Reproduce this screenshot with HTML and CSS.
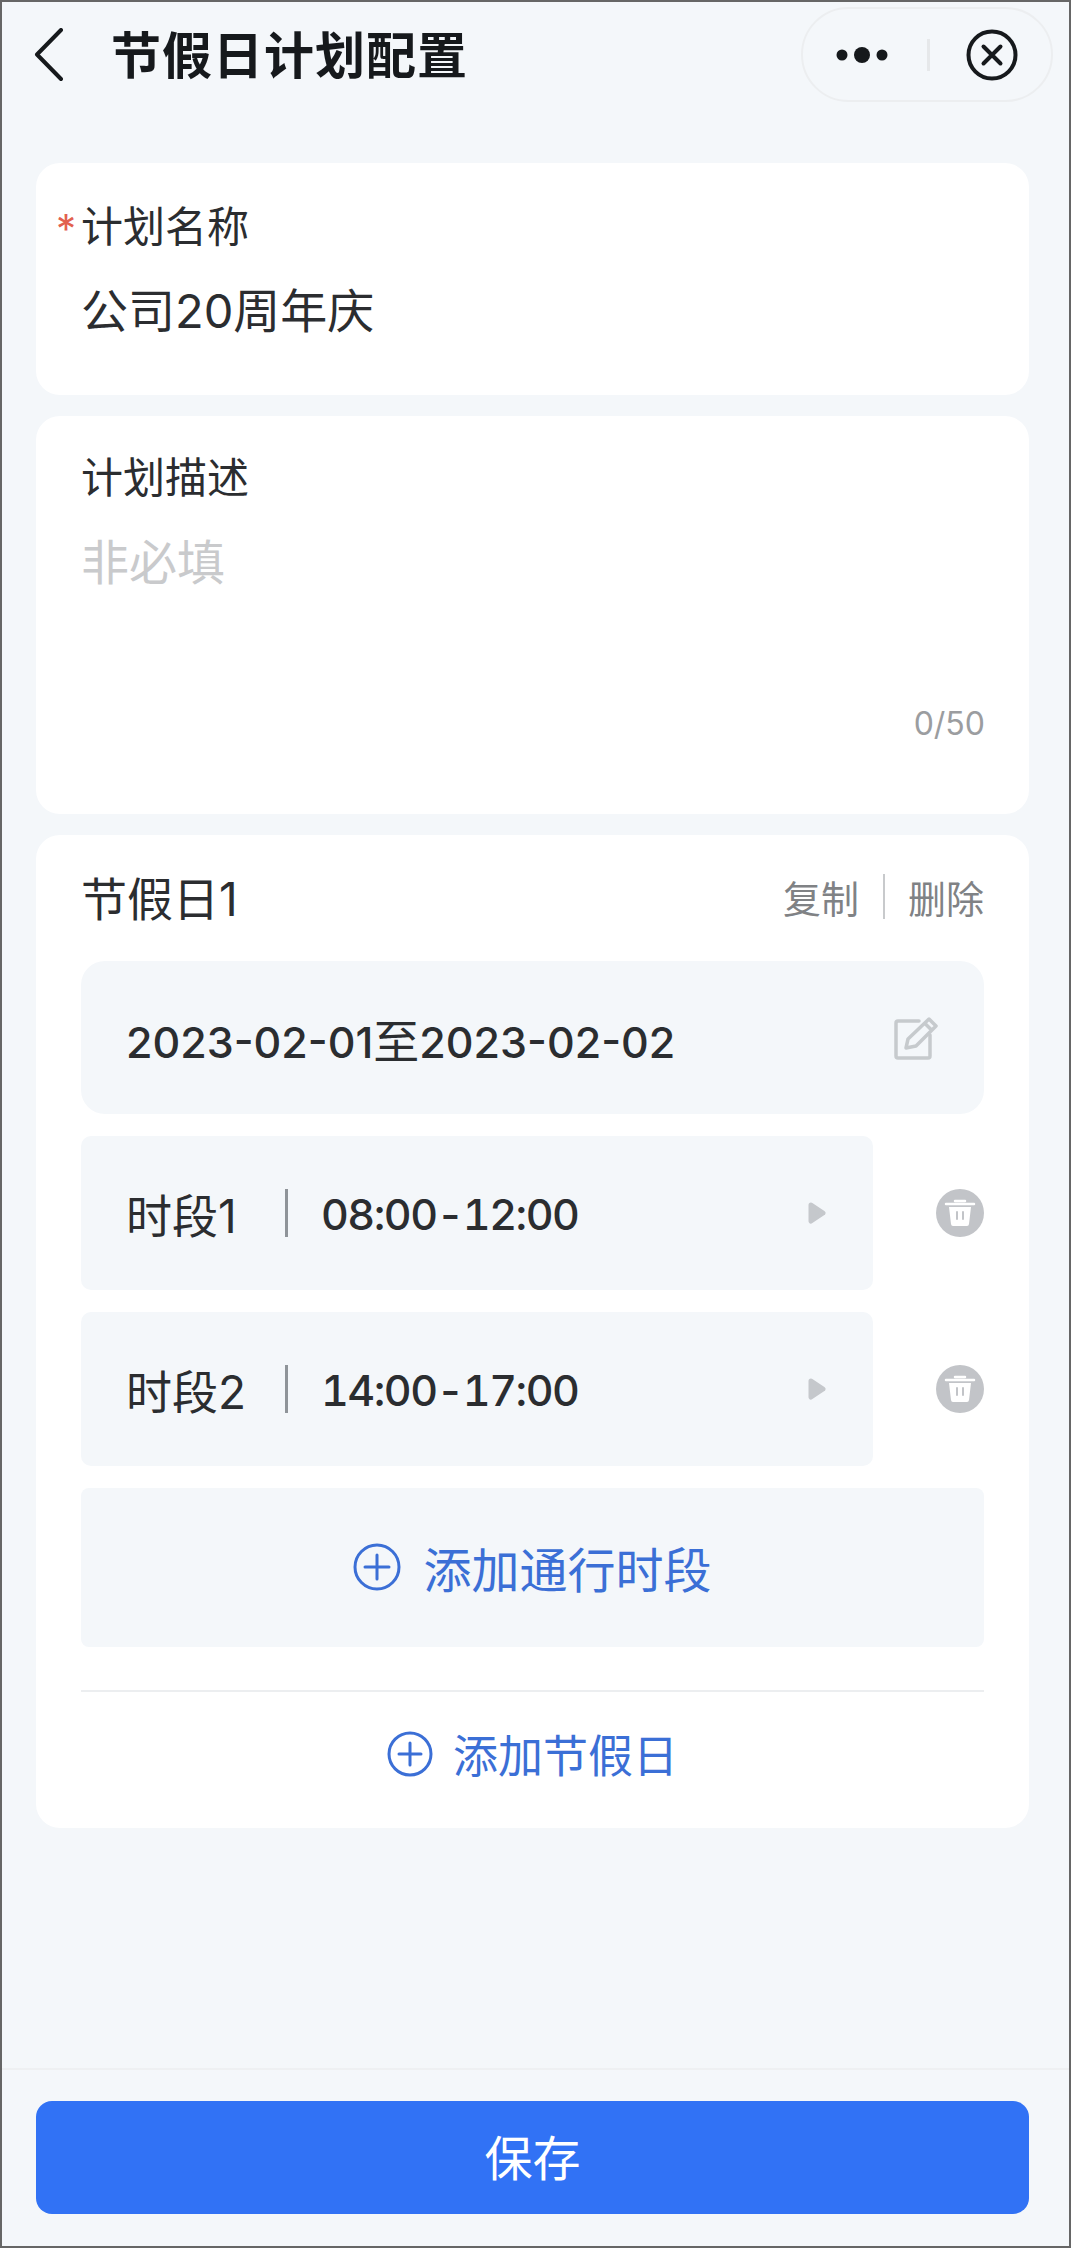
FILE: index.html
```html
<!DOCTYPE html>
<html lang="zh-CN">
<head>
    <meta charset="UTF-8">
    <meta name="viewport" content="width=device-width, initial-scale=1.0">
    <title>节假日计划配置</title>
    <link rel="stylesheet" href="styles.css">
</head>
<body>
    <div class="page">
        <div class="nav">
            <svg class="back" width="30" height="54" viewBox="0 0 30 54">
                <path d="M27 2 L3 26.5 L27 51" fill="none" stroke="#16191c" stroke-width="4" stroke-linecap="round" stroke-linejoin="round"/>
            </svg>
            <div class="nav-title">节假日计划配置</div>
            <div class="capsule">
                <svg width="64" height="20" viewBox="0 0 64 20">
                    <circle cx="11" cy="10" r="5.5" fill="#16191c"/>
                    <circle cx="31" cy="10" r="8" fill="#16191c"/>
                    <circle cx="51" cy="10" r="5.5" fill="#16191c"/>
                </svg>
                <span class="capsule-line"></span>
                <svg width="52" height="52" viewBox="0 0 52 52">
                    <circle cx="26" cy="26" r="23.5" fill="none" stroke="#16191c" stroke-width="4"/>
                    <path d="M17.5 17.5 L34.5 34.5 M34.5 17.5 L17.5 34.5" stroke="#16191c" stroke-width="4" stroke-linecap="round"/>
                </svg>
            </div>
        </div>

        <div class="main">
            <div class="card card-name">
                <div class="label"><span class="req">*</span>计划名称</div>
                <div class="value">公司20周年庆</div>
            </div>

            <div class="card card-desc">
                <div class="label">计划描述</div>
                <div class="holder">非必填</div>
                <div class="count">0/50</div>
            </div>

            <div class="card card-day">
                <div class="day-head">
                    <div class="day-name">节假日1</div>
                    <div class="day-ops">
                        <span>复制</span>
                        <i class="ops-line"></i>
                        <span>删除</span>
                    </div>
                </div>

                <div class="date-box">
                    <div class="date-text">2023-02-01<span class="date-to">至</span>2023-02-02</div>
                    <svg width="44" height="44" viewBox="0 0 44 44">
                        <path d="M25 5 H4 a2 2 0 0 0 -2 2 V40 a2 2 0 0 0 2 2 H34 a2 2 0 0 0 2 -2 V19" fill="none" stroke="#c6cacd" stroke-width="3.5" stroke-linecap="round"/>
                        <path d="M35 3 L42 10 L22 30 L12 32 L14 23 Z M31 7.5 L38 14.5" fill="none" stroke="#c6cacd" stroke-width="3.5" stroke-linejoin="round"/>
                    </svg>
                </div>

                <div class="time-row">
                    <div class="time-box">
                        <span class="time-name">时段1</span>
                        <i class="time-line"></i>
                        <span class="time-text">08:00-12:00</span>
                        <svg class="arrow" width="18" height="22" viewBox="0 0 18 22">
                            <path d="M3 3 L15 11 L3 19 Z" fill="#c5c8cc" stroke="#c5c8cc" stroke-width="5" stroke-linejoin="round"/>
                        </svg>
                    </div>
                    <svg width="48" height="48" viewBox="0 0 48 48">
                        <circle cx="24" cy="24" r="24" fill="#c2c4c8"/>
                        <path d="M10 15 H38 M19 12 H29" stroke="#fff" stroke-width="2.5" stroke-linecap="round"/>
                        <path d="M13 18 H35 L33 35 Q32.8 37 31 37 H17 Q15.2 37 15 35 Z" fill="#fff"/>
                        <path d="M21 23 V30 M27 23 V30" stroke="#c2c4c8" stroke-width="2" stroke-linecap="round"/>
                    </svg>
                </div>

                <div class="time-row">
                    <div class="time-box">
                        <span class="time-name">时段2</span>
                        <i class="time-line"></i>
                        <span class="time-text">14:00-17:00</span>
                        <svg class="arrow" width="18" height="22" viewBox="0 0 18 22">
                            <path d="M3 3 L15 11 L3 19 Z" fill="#c5c8cc" stroke="#c5c8cc" stroke-width="5" stroke-linejoin="round"/>
                        </svg>
                    </div>
                    <svg width="48" height="48" viewBox="0 0 48 48">
                        <circle cx="24" cy="24" r="24" fill="#c2c4c8"/>
                        <path d="M10 15 H38 M19 12 H29" stroke="#fff" stroke-width="2.5" stroke-linecap="round"/>
                        <path d="M13 18 H35 L33 35 Q32.8 37 31 37 H17 Q15.2 37 15 35 Z" fill="#fff"/>
                        <path d="M21 23 V30 M27 23 V30" stroke="#c2c4c8" stroke-width="2" stroke-linecap="round"/>
                    </svg>
                </div>

                <div class="add-time">
                    <svg width="48" height="48" viewBox="0 0 48 48">
                        <circle cx="24" cy="24" r="22" fill="none" stroke="#3b6fd6" stroke-width="3"/>
                        <path d="M12 24 H36 M24 12 V36" stroke="#3b6fd6" stroke-width="3" stroke-linecap="round"/>
                    </svg>
                    <span>添加通行时段</span>
                </div>

                <div class="add-day">
                    <svg width="46" height="46" viewBox="0 0 46 46">
                        <circle cx="23" cy="23" r="21" fill="none" stroke="#3b6fd6" stroke-width="3"/>
                        <path d="M12 23 H34 M23 12 V34" stroke="#3b6fd6" stroke-width="3" stroke-linecap="round"/>
                    </svg>
                    <span>添加节假日</span>
                </div>
            </div>
        </div>

        <div class="foot">
            <div class="save">保存</div>
        </div>
    </div>
</body>
</html>
```

FILE: styles.css
```css
* {
    box-sizing: border-box;
}

body {
    margin: 0;
    font-family: Inter, "Noto Sans CJK SC", sans-serif;
    color: #2b2d30;
}

.page {
    width: 1071px;
    height: 2248px;
    border: 2px solid #666;
    background: #f4f7fa;
    display: flex;
    flex-direction: column;
}

.nav {
    height: 103px;
    flex-shrink: 0;
    display: flex;
    align-items: center;
    padding: 2px 16px 0 32px;
}

.nav-title {
    font-size: 50px;
    font-weight: 700;
    color: #16191c;
    margin-left: 47px;
    letter-spacing: 1px;
    padding-bottom: 5px;
}

.capsule {
    margin-left: auto;
    width: 252px;
    height: 95px;
    border: 2px solid #eceef0;
    border-radius: 48px;
    display: flex;
    align-items: center;
    padding-left: 28px;
}

.capsule-line {
    width: 3px;
    height: 32px;
    background: #e6e8ea;
    margin: 0 36px 0 32px;
}

.main {
    flex: 1;
    padding: 58px 40px 0 34px;
    display: flex;
    flex-direction: column;
    gap: 21px;
}

.card {
    background: #fff;
    border-radius: 24px;
}

.card-name {
    height: 232px;
    padding: 34px 44px 0 45px;
}

.card-desc {
    height: 398px;
    padding: 32px 44px 0 45px;
    position: relative;
}

.label {
    font-size: 42px;
    line-height: 60px;
    position: relative;
}

.req {
    position: absolute;
    left: -25px;
    top: 2px;
    font-size: 40px;
    color: #e2604e;
}

.value {
    font-size: 47px;
    line-height: 70px;
    margin-top: 19px;
}

.holder {
    font-size: 48px;
    line-height: 70px;
    margin-top: 20px;
    color: #c9cacc;
}

.count {
    position: absolute;
    right: 44px;
    bottom: 68px;
    font-size: 32px;
    line-height: 44px;
    color: #9b9da0;
}

.card-day {
    height: 993px;
    padding: 0 45px 0 45px;
}

.day-head {
    height: 122px;
    margin-bottom: 4px;
    display: flex;
    align-items: center;
    justify-content: space-between;
}

.day-name {
    font-size: 46px;
}

.day-ops {
    display: flex;
    align-items: center;
    font-size: 38px;
    color: #808285;
}

.ops-line {
    width: 2px;
    height: 45px;
    background: #c8cacc;
    margin: 0 23px 0 24px;
}

.date-box {
    height: 153px;
    background: #f4f7fa;
    border-radius: 24px;
    display: flex;
    align-items: center;
    justify-content: space-between;
    padding: 0 46px 0 45px;
    margin-bottom: 22px;
}

.date-text {
    font-size: 43px;
    font-weight: 500;
}

.date-to {
    font-size: 46px;
    font-weight: 400;
}

.time-row {
    display: flex;
    align-items: center;
    justify-content: space-between;
    margin-bottom: 22px;
}

.time-box {
    width: 792px;
    height: 154px;
    background: #f4f7fa;
    border-radius: 10px;
    display: flex;
    align-items: center;
    padding: 0 47px 0 45px;
}

.time-name {
    width: 159px;
    font-size: 46px;
}

.time-line {
    width: 3px;
    height: 48px;
    background: #8f9499;
    margin-right: 33px;
}

.time-text {
    font-size: 43px;
    font-weight: 500;
    font-variant-numeric: tabular-nums;
    letter-spacing: -1.5px;
    padding-top: 2px;
}

.arrow {
    margin-left: auto;
}

.add-time {
    height: 159px;
    background: #f4f7fa;
    border-radius: 8px;
    display: flex;
    align-items: center;
    justify-content: center;
    gap: 22px;
    font-size: 48px;
    color: #3b6fd6;
    padding-bottom: 2px;
}

.add-day {
    margin-top: 43px;
    height: 137px;
    border-top: 2px solid #eceef0;
    padding-bottom: 12px;
    display: flex;
    align-items: center;
    justify-content: center;
    gap: 20px;
    font-size: 45px;
    color: #3b6fd6;
}

.foot {
    height: 178px;
    flex-shrink: 0;
    border-top: 2px solid #eef0f2;
    padding: 31px 40px 0 34px;
}

.save {
    height: 113px;
    background: #3172f5;
    border-radius: 16px;
    color: #fff;
    font-size: 48px;
    display: flex;
    align-items: center;
    justify-content: center;
    padding-bottom: 6px;
}
```
